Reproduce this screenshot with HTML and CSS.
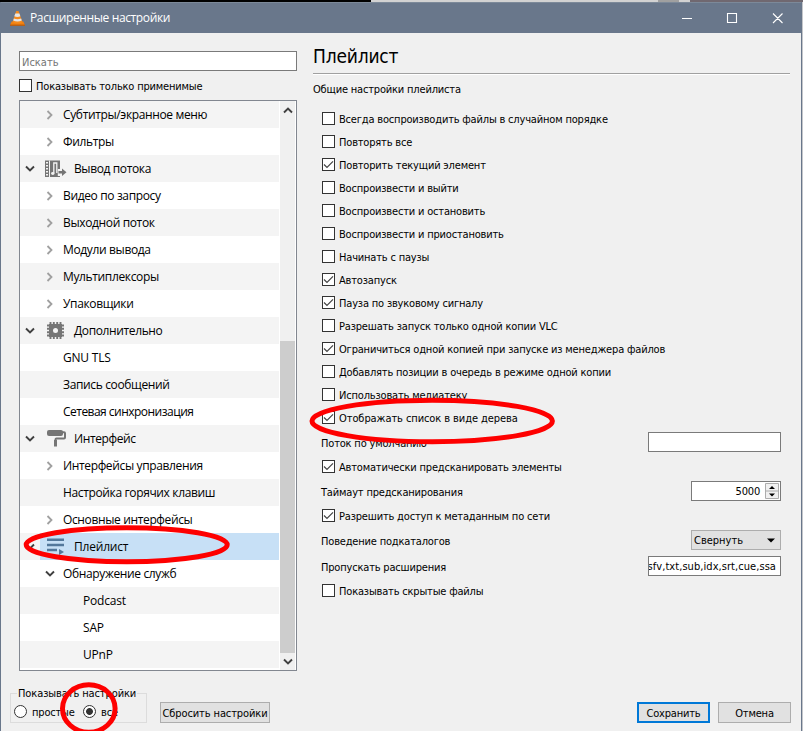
FILE: index.html
```html
<!DOCTYPE html>
<html lang="ru">
<head>
<meta charset="utf-8">
<title>Расширенные настройки</title>
<link rel="stylesheet" href="styles.css">
</head>
<body>
<svg class="defs" width="0" height="0">
  <symbol id="right" viewBox="0 0 8 10"><path d="M1.5 1 5.5 5l-4 4" fill="none" stroke="#a0a0a0" stroke-width="1.8"/></symbol>
  <symbol id="down" viewBox="0 0 10 8"><path d="M1 1.5 5 5.5l4-4" fill="none" stroke="#404040" stroke-width="1.9"/></symbol>
  <symbol id="tick" viewBox="0 0 11 11"><path d="M1 5.5 4 8.5 10 2.3" fill="none" stroke="#444" stroke-width="1.2"/></symbol>
</svg>
<div class="strip"><i class="s1"></i><i class="s2"></i><i class="s3"></i><i class="s4"></i><i class="s5"></i></div>
<div class="window">
  <header class="titlebar">
    <svg class="cone" width="15" height="17" viewBox="0 0 15 17"><path d="M1.6 11.5h11.8L15 15.6H0z" fill="#f08010"/><path d="M0 14.6h15v1.2H0z" fill="#b75a0c"/><path d="M6.2 1h2.3l4 11.3q-5 2.5-10 0z" fill="#f58a1c"/><path d="M5.3 3.5h4.1l1 2.8q-3 1.2-6.1 0zM3.9 8.500q3.600 1.400 7.200 0l.7 2q-4.300 1.800-8.600 0z" fill="#e3e5e8"/></svg>
    <span class="caption">Расширенные настройки</span>
    <svg class="winbtns" width="104" height="12" viewBox="0 0 104 12"><path d="M1 6.5h10M46.500 1.500h9v9h-9zM92 1.500l9.500 9.500M101.500 1.500 92 11" fill="none" stroke="#fff" stroke-width="1.1"/></svg>
  </header>
  <main class="content">
    <section class="left">
      <div class="search">Искать</div>
      <label class="check only"><b class="box"></b><span>Показывать только применимые</span></label>
      <div class="treebox">
        <div class="tree">
          <div class="row l1"><span class="arr"><svg width="8" height="10"><use href="#right"/></svg></span><span>Субтитры/экранное меню</span></div>
          <div class="row l1"><span class="arr"><svg width="8" height="10"><use href="#right"/></svg></span><span>Фильтры</span></div>
          <div class="row l0"><span class="arr"><svg width="10" height="8"><use href="#down"/></svg></span><span class="ico"><svg width="22" height="18" viewBox="0 0 22 18"><path fill="#757575" d="M0 .500h15v16.500H0z"/><path fill="#f4f4f4" d="M1 2h2v1.500H1zM1 5h2v1.500H1zM1 8h2v1.500H1zM1 11h2v1.500H1zM1 14h2v1.500H1zM4 .500h1V17H4zM12.800 9H15v7h-2.200z"/><path d="M8.800 13.300V3h3v10" fill="none" stroke="#f4f4f4" stroke-width="1.300"/><ellipse cx="7.800" cy="13.500" rx="1.700" ry="1.400" fill="#f4f4f4"/><path fill="#757575" d="M13.500 11H17V8.500l4.500 3.800L17 16v-2.500h-3.500z"/></svg></span><span>Вывод потока</span></div>
          <div class="row l1"><span class="arr"><svg width="8" height="10"><use href="#right"/></svg></span><span>Видео по запросу</span></div>
          <div class="row l1"><span class="arr"><svg width="8" height="10"><use href="#right"/></svg></span><span>Выходной поток</span></div>
          <div class="row l1"><span class="arr"><svg width="8" height="10"><use href="#right"/></svg></span><span>Модули вывода</span></div>
          <div class="row l1"><span class="arr"><svg width="8" height="10"><use href="#right"/></svg></span><span>Мультиплексоры</span></div>
          <div class="row l1"><span class="arr"><svg width="8" height="10"><use href="#right"/></svg></span><span>Упаковщики</span></div>
          <div class="row l0"><span class="arr"><svg width="10" height="8"><use href="#down"/></svg></span><span class="ico"><svg class="in" width="17" height="17" viewBox="0 0 17 17"><path d="M3.500 0v17M6.800 0v17M10.200 0v17M13.500 0v17M0 3.500h17M0 6.800h17M0 10.200h17M0 13.500h17" stroke="#757575" stroke-width="1.900"/><path fill="#757575" d="M2 2h13v13H2z"/><circle cx="8.500" cy="8.500" r="2.500" fill="#f4f4f4"/></svg></span><span>Дополнительно</span></div>
          <div class="row l1 latin"><span class="arr"></span><span>GNU TLS</span></div>
          <div class="row l1"><span class="arr"></span><span>Запись сообщений</span></div>
          <div class="row l1 tight"><span class="arr"></span><span>Сетевая синхронизация</span></div>
          <div class="row l0"><span class="arr"><svg width="10" height="8"><use href="#down"/></svg></span><span class="ico"><svg class="in" width="19" height="17" viewBox="0 0 19 17"><rect width="16" height="6" rx="2" fill="#757575"/><path d="M15 2.200h2q1 0 1 1V7.500q0 1-1 1H9.500q-1 0-1 1V12" fill="none" stroke="#757575" stroke-width="2"/><path d="M7 10h3v6.500H7z" fill="#757575"/></svg></span><span>Интерфейс</span></div>
          <div class="row l1"><span class="arr"><svg width="8" height="10"><use href="#right"/></svg></span><span>Интерфейсы управления</span></div>
          <div class="row l1"><span class="arr"></span><span>Настройка горячих клавиш</span></div>
          <div class="row l1"><span class="arr"><svg width="8" height="10"><use href="#right"/></svg></span><span>Основные интерфейсы</span></div>
          <div class="row l0 selected"><span class="arr"><svg width="10" height="8"><use href="#down"/></svg></span><span class="ico"><svg class="in" width="17" height="17" viewBox="0 0 17 17"><path fill="#53789b" d="M0 .500h17v2.500H0zM0 5.700h17v2.500H0zM0 10.800h10v2.500H0zM12 11l5 3-5 3z"/></svg></span><span>Плейлист</span></div>
          <div class="row l1"><span class="arr"><svg width="10" height="8"><use href="#down"/></svg></span><span>Обнаружение служб</span></div>
          <div class="row l2 latin"><span>Podcast</span></div>
          <div class="row l2 latin"><span>SAP</span></div>
          <div class="row l2 latin"><span>UPnP</span></div>
        </div>
        <div class="scroll">
          <svg class="up" width="10" height="8"><use href="#down"/></svg>
          <div class="thumb"></div>
          <svg width="10" height="8"><use href="#down"/></svg>
        </div>
      </div>
    </section>
    <section class="right">
      <h1><span>Плейлист</span></h1>
      <p><span>Общие настройки плейлиста</span></p>
      <div class="options">
        <label class="check"><b class="box"></b><span>Всегда воспроизводить файлы в случайном порядке</span></label>
        <label class="check"><b class="box"></b><span>Повторять все</span></label>
        <label class="check"><b class="box"><svg width="11" height="11"><use href="#tick"/></svg></b><span>Повторить текущий элемент</span></label>
        <label class="check"><b class="box"></b><span>Воспроизвести и выйти</span></label>
        <label class="check"><b class="box"></b><span>Воспроизвести и остановить</span></label>
        <label class="check"><b class="box"></b><span>Воспроизвести и приостановить</span></label>
        <label class="check"><b class="box"></b><span>Начинать с паузы</span></label>
        <label class="check"><b class="box"><svg width="11" height="11"><use href="#tick"/></svg></b><span>Автозапуск</span></label>
        <label class="check"><b class="box"><svg width="11" height="11"><use href="#tick"/></svg></b><span>Пауза по звуковому сигналу</span></label>
        <label class="check"><b class="box"></b><span>Разрешать запуск только одной копии VLC</span></label>
        <label class="check"><b class="box"><svg width="11" height="11"><use href="#tick"/></svg></b><span>Ограничиться одной копией при запуске из менеджера файлов</span></label>
        <label class="check"><b class="box"></b><span>Добавлять позиции в очередь в режиме одной копии</span></label>
        <label class="check"><b class="box"></b><span>Использовать медиатеку</span></label>
        <label class="check loose"><b class="box"><svg width="11" height="11"><use href="#tick"/></svg></b><span>Отображать список в виде дерева</span></label>
        <div class="field"><span>Поток по умолчанию</span><div class="input wide"></div></div>
        <label class="check"><b class="box"><svg width="11" height="11"><use href="#tick"/></svg></b><span>Автоматически предсканировать элементы</span></label>
        <div class="field"><span>Таймаут предсканирования</span><div class="input spin"><span>5000</span><svg width="14" height="16" viewBox="0 0 14 16"><path d="M.500.500h13v15H.500zM.500 8h13" fill="#f0f0f0" stroke="#acacac"/><path d="M4 6l3-3 3 3zM4 10.500h6l-3 3z"/></svg></div></div>
        <label class="check"><b class="box"><svg width="11" height="11"><use href="#tick"/></svg></b><span>Разрешить доступ к метаданным по сети</span></label>
        <div class="field"><span>Поведение подкаталогов</span><div class="select"><span>Свернуть</span><svg width="8" height="5" viewBox="0 0 8 5"><path d="M0 .500h8L4 4.500z"/></svg></div></div>
        <div class="field"><span>Пропускать расширения</span><div class="input wide ext"><span>sfv,txt,sub,idx,srt,cue,ssa</span></div></div>
        <label class="check"><b class="box"></b><span>Показывать скрытые файлы</span></label>
      </div>
    </section>
  </main>
  <footer>
    <fieldset>
      <legend>Показывать настройки</legend>
      <div class="radios"><i class="radio"></i><span class="simple">простые</span><i class="radio on"></i><span>все</span></div>
    </fieldset>
    <div class="button reset">Сбросить настройки</div>
    <div class="button save">Сохранить</div>
    <div class="button">Отмена</div>
  </footer>
</div>
<svg class="marks" width="803" height="731" viewBox="0 0 803 731" fill="none" stroke="#fe0000" stroke-width="5">
  <ellipse cx="432.200" cy="421" rx="120.200" ry="20.700"/>
  <ellipse cx="126.700" cy="544.800" rx="100.500" ry="17"/>
  <ellipse cx="88.800" cy="708.500" rx="26.300" ry="23.700"/>
</svg>
</body>
</html>
```
FILE: styles.css
```css
* { box-sizing: border-box; }
body {
  margin: 0;
  width: 803px;
  height: 731px;
  overflow: hidden;
  background: #c4c6ca;
  color: #000;
  font: 11px/13px "DejaVu Sans Condensed", "DejaVu Sans", sans-serif;
  letter-spacing: -.18px;
  white-space: nowrap;
}
svg { display: block; flex: none; }
.defs { position: absolute; }
.strip { display: flex; height: 2px; }
.s1 { width: 371px; background: #000; }
.s2 { width: 287px; background: #d2d2d2; }
.s3 { width: 21px; background: #a0a0a0; }
.s4 { width: 11px; background: #d2d2d2; }
.s5 { flex: 1; background: #706870; }
.window {
  width: 802px;
  height: 729px;
  background: #f0f0f0;
  border: solid #69778b;
  border-width: 0 1px;
}
.titlebar {
  height: 31px;
  display: flex;
  align-items: center;
  padding-left: 9px;
  background: #69778b;
  border-top: 1px solid #7c8999;
  color: #fff;
}
.caption {
  margin-left: 5px;
  font: 12px/16px "Open Sans", sans-serif;
  letter-spacing: -.38px;
}
.winbtns { margin: -1px 16px 0 auto; }
.content { display: flex; height: 638px; }
.left { width: 278px; margin: 18px 0 0 18px; }
.search {
  height: 20px;
  padding: 4px 2px;
  border: 1px solid #7a7a7a;
  background: #fff;
  color: #757575;
  letter-spacing: 0;
}
.check { display: flex; align-items: center; height: 23px; }
.check span, .field span { padding-top: 1px; }
.field > span { padding-top: 2px; margin-left: -1px; }
.loose { letter-spacing: -.08px; }
.box {
  width: 13px;
  height: 13px;
  margin-right: 4px;
  border: 1px solid #333;
  background: #fff;
}
.only { margin-top: 3px; }
.treebox {
  display: flex;
  height: 571px;
  margin-top: 3px;
  border: 1px solid #828790;
  background: #fff;
}
.tree {
  width: 259px;
  margin-right: 1px;
  font: 12px/16px "Open Sans", sans-serif;
  letter-spacing: -.36px;
}
.l0 { letter-spacing: -.44px; }
.latin { letter-spacing: -.2px; }
.tight { letter-spacing: -.52px; }
.row { display: flex; align-items: center; height: 27px; }
.row:nth-child(odd) { background: #f4f4f4; }
.arr { width: 20px; display: flex; justify-content: center; }
.l1 { padding-left: 20px; }
.l1 .arr { margin-right: 3px; }
.l2 { padding-left: 63px; }
.ico { width: 34px; padding-left: 5px; }
.in { margin-left: 2px; }
.row.l0 { letter-spacing: -.38px; }
.row.selected { background: linear-gradient(90deg, #f4f4f4 20px, #c7e0f6 20px); letter-spacing: -.2px; }
.scroll {
  width: 15px;
  display: flex;
  flex-direction: column;
  align-items: center;
  padding: 5px 0 4px;
  background: #f0f0f0;
}
.up { transform: scaleY(-1); }
.thumb { width: 15px; height: 312px; margin: auto 0 5px; background: #cdcdcd; }
.right { width: 477px; margin-left: 16px; }
h1 {
  height: 41px;
  margin: 0;
  padding-top: 11px;
  border-bottom: 1px solid #a0a0a0;
  box-shadow: 0 1px #fff;
  font-size: 19px;
  font-weight: normal;
  line-height: 24px;
}
p { margin: 9px 0 11px; }
.options { width: 468px; padding-left: 9px; }
.field {
  display: flex;
  align-items: center;
  justify-content: space-between;
  height: 26px;
}
.input, .select {
  display: flex;
  align-items: center;
  height: 20px;
  border: 1px solid #7a7a7a;
  background: #fff;
}
.wide { width: 133px; }
.ext { justify-content: flex-end; overflow: hidden; padding-right: 4px; letter-spacing: .06px; }
.spin { width: 90px; justify-content: flex-end; gap: 5px; padding-right: 1px; }
.select {
  width: 90px;
  justify-content: space-between;
  padding: 0 5px 0 2px;
  border-color: #adadad;
  background: #e1e1e1;
  letter-spacing: 0;
}
footer { display: flex; padding: 15px 10px 0 9px; }
fieldset {
  width: 137px;
  height: 37px;
  margin: 0;
  padding: 0 4px;
  border: 1px solid #dcdcdc;
}
legend { margin-left: 2px; padding: 1px 1px 0; letter-spacing: -.1px; }
.radios { display: flex; align-items: center; height: 13px; margin-top: 5px; }
.radios span { padding-top: 1px; }
.radio {
  width: 13px;
  height: 13px;
  margin-right: 5px;
  border: 1px solid #333;
  border-radius: 50%;
  background: #fff;
}
.radios .radio:first-child { margin-left: -1px; }
.simple { width: 51px; }
.on { background: radial-gradient(circle, #333 3px, #fff 3.8px); }
.button {
  width: 73px;
  height: 21px;
  margin: 16px 0 0 8px;
  border: 1px solid #adadad;
  background: #e1e1e1;
  text-align: center;
  line-height: 21px;
}
.reset { width: 110px; margin-left: 13px; letter-spacing: -.1px; }
.save { margin-left: auto; border: 2px solid #0078d7; line-height: 19px; }
.marks { position: absolute; left: 0; top: 0; }
```
